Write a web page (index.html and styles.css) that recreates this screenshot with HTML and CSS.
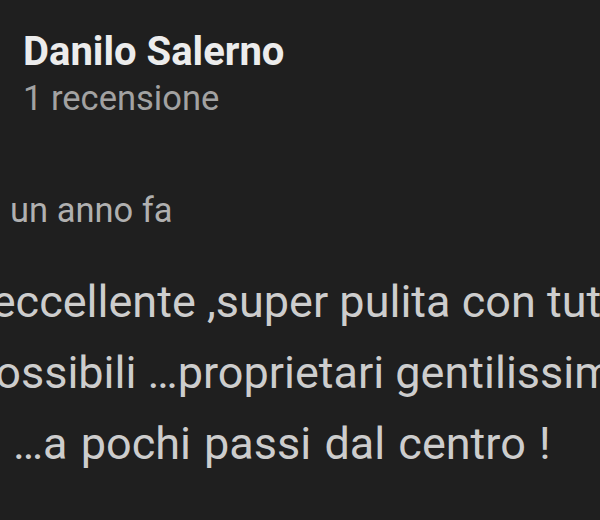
FILE: index.html
```html
<!DOCTYPE html>
<html lang="it">
<head>
<meta charset="utf-8">
<title>Recensione</title>
<link rel="stylesheet" href="styles.css">
</head>
<body>
<main class="review">
  <header class="author">
    <div class="name">Danilo Salerno</div>
    <div class="count">1 recensione</div>
  </header>
  <div class="date">un anno fa</div>
  <div class="text">
    <div class="line l1">Struttura eccellente ,super pulita con tutti i comfort</div>
    <div class="line l2">possibili …proprietari gentilissimi</div>
    <div class="line l3">in  …a pochi passi dal centro !</div>
  </div>
</main>
</body>
</html>
```
FILE: styles.css
```css
html, body {
  margin: 0;
  padding: 0;
  background: #1f1f1f;
}
body {
  width: 600px;
  height: 520px;
  overflow: hidden;
  font-family: Roboto, "Noto Sans", sans-serif;
}
.review {
  padding-top: 28px;
}
.author {
  padding-left: 23px;
}
.name {
  font-size: 40px;
  line-height: 48px;
  font-weight: 700;
  color: #ececec;
}
.count {
  margin-top: 2px;
  font-size: 34.5px;
  line-height: 40px;
  color: #a2a2a2;
}
.date {
  margin-top: 72px;
  padding-left: 10px;
  font-size: 34.5px;
  line-height: 40px;
  color: #b0b0b0;
}
.text {
  margin-top: 36px;
  font-size: 45px;
  line-height: 71px;
  color: #cdcdcd;
  overflow: hidden;
}
.line {
  white-space: nowrap;
}
.l1 { margin-left: -194px; }
.l2 { margin-left: -30px; }
.l3 { margin-left: -36px; word-spacing: 2px; }
```
